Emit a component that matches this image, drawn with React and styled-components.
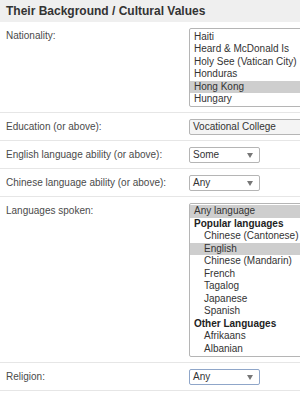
import React from 'react';
import styled, { createGlobalStyle } from 'styled-components';

const GlobalStyle = createGlobalStyle`
  html, body {
    margin: 0;
    padding: 0;
    background: #fff;
    overflow: hidden;
  }
  body {
    font-family: "Liberation Sans", Arial, sans-serif;
    font-size: 10px;
    color: #444;
  }
`

const Panel = styled.div`
  width: 300px;
  overflow: hidden;
`

const Header = styled.div`
  height: 22px;
  background: #efefef;
  display: flex;
  align-items: center;
  padding: 0 6px;
  h2{
    margin: 0;
    font-size: 12px;
    font-weight: bold;
    color: #333;
    white-space: nowrap;
  }
`

const Row = styled.div`
  display: flex;
  align-items: flex-start;
  padding: 6px 0 5px 6px;
  border-bottom: 1px solid #e6e6e6;
`

const Label = styled.div`
  width: 183px;
  flex: none;
  line-height: 14px;
  padding-top: 1px;
  color: #4a4a4a;
`

const Dropdown = styled.div`
  flex: none;
  box-sizing: border-box;
  height: 16px;
  width: ${p => p.$wide ? '130px' : '71px'};
  border: 1px solid ${p => p.$focus ? '#8fa6c9' : '#b5b5b5'};
  border-radius: 2px;
  background: ${p => p.$wide ? '#f4f4f4' : '#fff'};
  display: flex;
  align-items: center;
  justify-content: space-between;
  padding: 0 6px 0 3px;
  color: #333;
  line-height: 14px;
  span.arrow{
    width: 0;
    height: 0;
    border-left: 3.5px solid transparent;
    border-right: 3.5px solid transparent;
    border-top: 5px solid #777;
    margin-top: 1px;
  }
`

const ListBox = styled.div`
  flex: none;
  box-sizing: border-box;
  width: 130px;
  height: ${p => p.$height}px;
  border: 1px solid #b5b5b5;
  border-radius: 2px;
  overflow: hidden;
  color: #333;
`

const Option = styled.div`
  height: 12.5px;
  line-height: 12.5px;
  white-space: nowrap;
  padding-left: ${p => p.$indent ? 14 : 4}px;
  font-weight: ${p => p.$group ? 'bold' : 'normal'};
  background: ${p => p.$selected ? '#cecece' : 'transparent'};
  color: ${p => p.$group ? '#222' : '#333'};
`

const ScrollArea = styled.div`
  margin-top: ${p => p.$shift}px;
`

const nationalities = [
  'Guyana', 'Haiti', 'Heard & McDonald Is', 'Holy See (Vatican City)',
  'Honduras', 'Hong Kong', 'Hungary'
]

const languages = [
  { name: 'Any language', selected: true },
  { name: 'Popular languages', group: true },
  { name: 'Chinese (Cantonese)', indent: true },
  { name: 'English', indent: true, selected: true },
  { name: 'Chinese (Mandarin)', indent: true },
  { name: 'French', indent: true },
  { name: 'Tagalog', indent: true },
  { name: 'Japanese', indent: true },
  { name: 'Spanish', indent: true },
  { name: 'Other Languages', group: true },
  { name: 'Afrikaans', indent: true },
  { name: 'Albanian', indent: true },
]

const App = () => {
  return (
    <Panel>
      <GlobalStyle />
      <Header><h2>Their Background / Cultural Values</h2></Header>

      <Row>
        <Label>Nationality:</Label>
        <ListBox $height={79}>
          <ScrollArea $shift={-11}>
            {nationalities.map(n => (
              <Option key={n} $selected={n === 'Hong Kong'}>{n}</Option>
            ))}
          </ScrollArea>
        </ListBox>
      </Row>

      <Row>
        <Label>Education (or above):</Label>
        <Dropdown $wide>Vocational College</Dropdown>
      </Row>

      <Row>
        <Label>English language ability (or above):</Label>
        <Dropdown>Some<span className="arrow" /></Dropdown>
      </Row>

      <Row>
        <Label>Chinese language ability (or above):</Label>
        <Dropdown>Any<span className="arrow" /></Dropdown>
      </Row>

      <Row>
        <Label>Languages spoken:</Label>
        <ListBox $height={154}>
          <ScrollArea $shift={1}>
            {languages.map(l => (
              <Option key={l.name} $group={l.group} $indent={l.indent} $selected={l.selected}>{l.name}</Option>
            ))}
          </ScrollArea>
        </ListBox>
      </Row>

      <Row>
        <Label>Religion:</Label>
        <Dropdown $focus>Any<span className="arrow" /></Dropdown>
      </Row>
    </Panel>
  )
}

export default App;
